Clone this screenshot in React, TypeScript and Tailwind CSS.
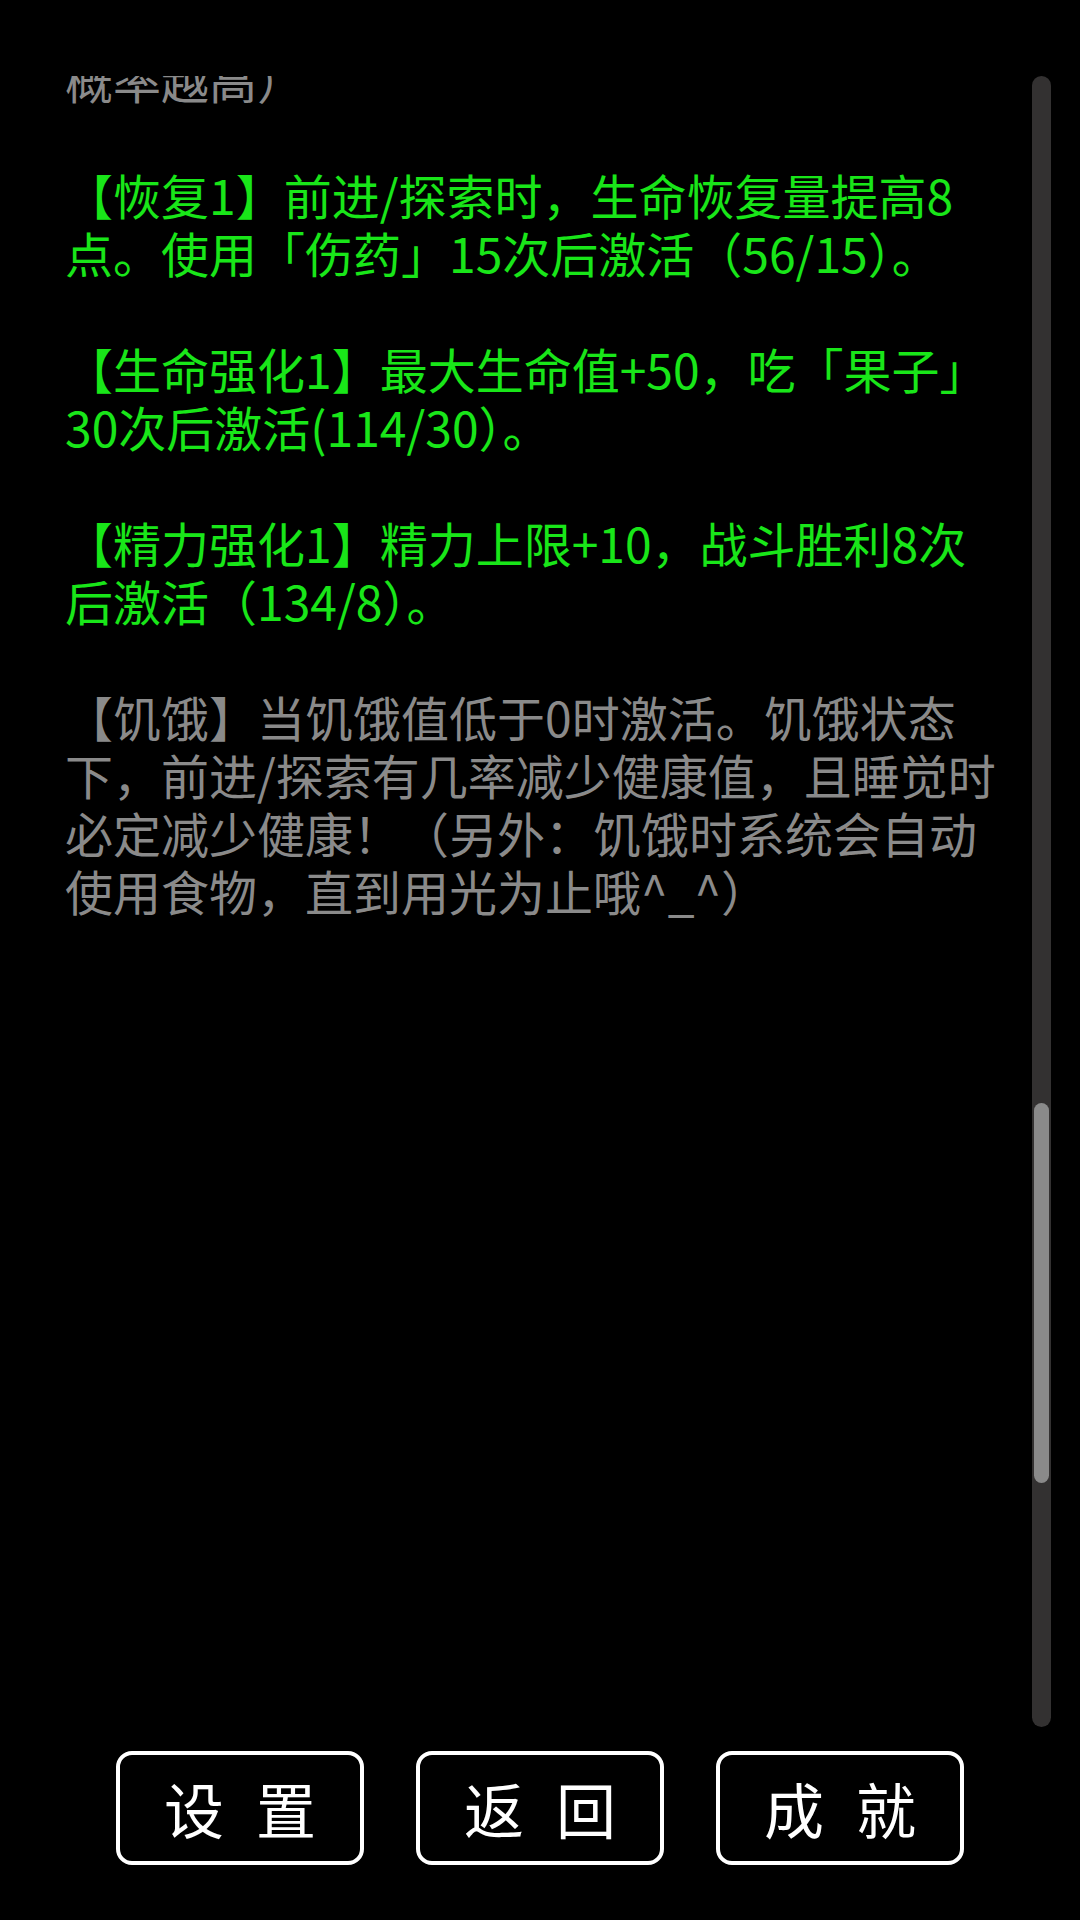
const GREEN = 'text-[#19e619]';
const GRAY = 'text-[#8a8a8a]';

interface Para {
    lines: string[];
    color: string;
}

const paras: Para[] = [
    { lines: ['概率越高）'], color: GRAY },
    {
        lines: ['【恢复1】前进/探索时，生命恢复量提高8', '点。使用「伤药」15次后激活（56/15）。'],
        color: GREEN,
    },
    {
        lines: ['【生命强化1】最大生命值+50，吃「果子」', '30次后激活(114/30）。'],
        color: GREEN,
    },
    {
        lines: ['【精力强化1】精力上限+10，战斗胜利8次', '后激活（134/8）。'],
        color: GREEN,
    },
    {
        lines: [
            '【饥饿】当饥饿值低于0时激活。饥饿状态',
            '下，前进/探索有几率减少健康值，且睡觉时',
            '必定减少健康！（另外：饥饿时系统会自动',
            '使用食物，直到用光为止哦^_^）',
        ],
        color: GRAY,
    },
];

const buttons = [
    ['设', '置'],
    ['返', '回'],
    ['成', '就'],
];

export default function App() {
    return (
        <div
            className="w-[1080px] h-[1920px] bg-black flex flex-col pt-[76px]"
            style={{ fontFamily: '"Noto Sans CJK SC", "Noto Sans", sans-serif' }}
        >
            {/* scroll area */}
            <div className="relative h-[1651px] overflow-hidden">
                <div className="pl-[65px] -mt-[27px] flex flex-col gap-[58px] text-[48px] leading-[58px]">
                    {paras.map((p, i) => (
                        <div key={i} className={p.color}>
                            {p.lines.map((l, j) => (
                                <div key={j} className="whitespace-nowrap">
                                    {l}
                                </div>
                            ))}
                        </div>
                    ))}
                </div>

                {/* scrollbar */}
                <div className="absolute top-0 bottom-0 left-[1032px] w-[19px] rounded-full bg-[#333131]">
                    <div className="absolute top-[1027px] left-[2px] right-[2px] h-[380px] rounded-[8px] bg-[#8a8a8a]" />
                </div>
            </div>

            {/* bottom buttons */}
            <div className="mt-[24px] flex justify-center gap-[52px]">
                {buttons.map((b, i) => (
                    <div
                        key={i}
                        className="w-[248px] h-[114px] border-[4px] border-white rounded-[16px] flex items-center justify-center gap-[32px] text-white text-[60px] leading-none"
                    >
                        <span>{b[0]}</span>
                        <span>{b[1]}</span>
                    </div>
                ))}
            </div>
        </div>
    );
}
